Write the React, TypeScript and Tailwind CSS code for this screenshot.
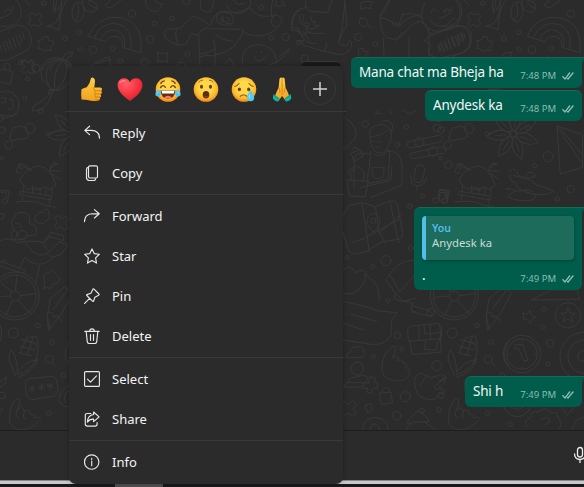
import type { ReactNode } from "react";

const FONT = "font-['Noto_Sans','Open_Sans',sans-serif]";

/* ---------- wallpaper ---------- */

function Dots({ items }: { items: number[][] }) {
  return (
    <>
      {items.map(([x, y, r], i) => (
        <circle key={i} cx={x} cy={y} r={r} />
      ))}
    </>
  );
}

function Flower({ x, y }: { x: number; y: number }) {
  return (
    <g transform={`translate(${x} ${y})`}>
      <circle r="9" />
      {[20, 72, 123, 175, 226, 278, 329].map((a) => (
        <path key={a} transform={`rotate(${a})`} d="M9 0Q36-30 80 0 36 30 9 0M22 0h34" />
      ))}
    </g>
  );
}

function TopTile() {
  return (
    <g>
      <path d="M0 78C45 86 68 60 62 25Q58 8 50 0M14 36q5-16 18-4M0 54q36-4 40-34M0 94l50-18q32-2 42 32c6 36-8 40-25 50L22 180l-22 2" />
      <path d="M0 135l5 18M8 125l10 30M17 123l11 26M26 118l12 31M37 113l10 26M48 108l12 30M58 103l8 24M68 98l5 20" />
      <path d="M87 45l10-7 9 8 12-6 8 8-9 11 8 12-9 9-13-7-9 7-9-8 7-12zM114 122l14-3 4-10 12 2 2 11 14 2v12l-8 4 2 12-14-2-8 5-7-8-11-2 4-10z" />
      <path d="M76 0l14 18M162 0q-6 20 2 40l6-38M184 0q2 36-14 64-10 12-30 14 24 4 36 12l4-20q-4-32 20-70M172 30l14-24" />
      <ellipse cx="234" cy="35" rx="18" ry="30" transform="rotate(5 234 35)" />
      <path d="M228 60q14-20 5-50M248 0q-4 16 8 30 20 14 34-2 6-24-26-28M264 8q10 12 26 18" />
      <path d="M316 14q6 12 20 8L364 0M316 14L332 0" />
      <path d="M266 108c22-66 112-74 146-22 10 16 14 40 10 72l-54-16q4-30-24-33-20-2-26 16zM284 112c22-54 84-52 104-12q8 16 4 48M302 118q16-34 46-27 32 10 26 50" />
      <path d="M62 186l12-8 9 8 12-8 8 8-9 10 8 14M127 210q12-30 42-31h30l14 14v17M150 210q4-20 28-30M180 180q24 10 32 30M190 180q-8-22 28-24l-4 14q-12-2-14 12M262 210q6-20 66-40l4 40M285 192l48-14" />
      <path d="M435 0q4 30 28 35 20-4 24-25-16 4-24-10M603 0l-3 24q10 16 34 10l8-34M494 106q-6-22 22-18l26-4 34-34q10-4 56 26 4-30 34-42l26 2q22 6 56-14 20 34 68 26M494 106q-4 14 44 30l20-4 16-32 20 6M536 134q-14-20-6-48" />
      <path d="M594 106q10-26 34-20l94 2q14 20 58 20 36-6 48-22M596 106l4 90M600 162q26-2 46-16M640 120q10 20 4 76M732 88q-20 66-88 78M646 100q10 18 50 24M600 170q20-8 44-2" />
      <rect x="650" y="38" width="50" height="36" rx="16" transform="rotate(12 675 56)" />
      <path d="M664 50l-1 10 12 4M670 50l-2 18M680 54q12-4 7 7l-10 8 12 2" />
      <path d="M680 16q10 28 40 24 38-10 32-40M700 0q8 20 34 10M728 196q-10-60 50-62 42 4 50 40 4 16-2 22M838 170l30-25q-5 26-60 51M762 170q14 30 36-2M768 158l2-3M784 158l2-3" />
      <path d="M818 0q-8 40 0 50 6-14 28 6-2 26-20 26-20-8-8-32M830 0l-4 18 30 0L844 0M472 156q16 10 32 0-8 16 0 30-16-6-32 0 6-14 0-30M670 196l20-20 12 20M874 90q2-52 26-60M874 90q16 0 26 8" />
      <Dots items={[[131,10,7],[396,41,11],[239,97,7],[195,115,7],[463,70,7],[516,55,7],[450,118,11],[338,145,7],[279,149,11],[241,148,6],[361,183,7],[434,187,11],[562,162,7],[559,2,11],[784,23,7],[857,111,11],[814,114,7],[544,198,12],[894,128,6]]} />
    </g>
  );
}

function TopRightExtras() {
  return (
    <g>
      <path d="M48 0q-8 20 10 34l56 4 6-24 6-14M50 22Q0 24 6 84h12q12-2 12 12 14 40 48 34M28 52q-3 28 28 28M28 52q0-14 12-6l2 8q-12 8 4 18l6-6q10 4 2 12M62 50l4 16 10-2-4 14 16-2q-18 18-40 8-8 20 54 16M18 86l18 20 22-12M22 122l20 0-8 12 28 8 40 12 50 10q32-4 34-38-10-14-12 8-12 10-28-6 12-36 24-50l-4-66M110 130q0 16-8 24M164 0q-2 70-16 120M40 94l20 30" />
      <path d="M212 8q18-8 36-2-12 10-4 20-16-6-34 2 8-8 0-20M210 54q14-4 22 8 4 12-8 18-14 0-16-14 0-8 4-12M234 76l10 9M206 170v-20l12-6 4 12 14-4-10 18" />
      <path d="M298 0q-10 36-30 50l50 20 12 8q10-24 60-34M268 50q10-20 30-50M272 54q-4 64 40 64 24-4 40-30 30-34 52-18 10 10 13 30v70M280 112l2 58M358 110l-2 60M340 40l-16 40-18-10M318 124l18-26M338 44q34-10 56 10" />
      <path d="M404 8c-30 68 20 92 50 84q68-10 60-70-2-18-12-22M424 36q4-20 16-2M464 36q4-18 18-2M418 56q34 48 74-2" />
      <path d="M404 122l24-20 86-25q32 4 30 38 0 30-24 44l-74 16-30-12 4-28zM416 98l14 6M444 136l4 18M450 128l10 28M462 122l10 28M474 114l10 34M486 108l10 32M500 104l9 30M512 100l8 24M522 100l3 16" />
      <Dots items={[[205,111,11],[256,132,7],[44,176,11]]} />
    </g>
  );
}

function SideTile() {
  return (
    <g>
      <path d="M0 34l8-7 30 8-6 38-32-8M12 28q-2-16 10-18 10 2 7 22M64 8l12-8 10 10 10-8 9 10-8 10 9 12-10 8-13-8-10 7-9-10 10-10z" />
      <path d="M128 60c-24-50 34-92 80-50 20 40-8 80-46 82zM154 90q-36-54 8-90M164 92q-6-60 22-90M170 90q40-40 28-84M150 90q20-4 28 0M156 95q-16 18-56 44l-4 14q44 2 58-46" />
      <path d="M0 94l12 4 4-6 22 6 4 8q18 4 14 38-4 18-20 24l-26 8-10-6M4 114h14l-2 14h-10M28 118q20 0 8 14 12 14-10 16M0 162q20 12 52 0" />
      <path d="M34 216l8-14 10 2 4-6 22 4 8 28-10 6-24 2-12 5-10-6z" />
      <path d="M60 360q20-40 60-42 34 8 48 58l-18 12-16-8-14 9-18-8-16 8-14-12zM58 318q-12-10 10 0l26 14q-38-36-40-14 0 8 14 6M150 330q4-30 24-18-20 4-26 20l32 2M52 324q-10 22 10 14M154 340l24 18M70 374v26M98 378v22M120 382v20M138 382v20M156 386v18M62 394l92 14v12l-94-16zM68 404v16M148 416v16M46 426q60-8 84 8l36 8M98 388h26" />
      <path d="M0 390l28 4-6 34q-18 6-16-8l12-4 2-18-20-2M0 460l14 4-6 14-8-2M106 470l14-14 8 2 6-10q16-2 12 14l4 10-22 20-22-6zM164 472l12-6 6 12 14-10 8 10-8 12 8 14-12 6-10-10-10 6-8-8 8-12z" />
      <path d="M42 510q-16-30 4-40 0-16 26-12 22 0 16 34 22-2 22 20 4 20-26 14-14 20-50 12M36 534q-10-18 8-24 14 6 0 28M46 490q14-4 18 12M0 542q24-14 52 6 48-10 78 0M130 548l20-18 40 12 2-14-40-12-22 34 10 18M198 552l-20-6-36 32q4 14 20 12l20-6 20-26zM78 550q30 50 66 30M74 592q46 44 90-4M74 592l-16 34M118 618l-10 52" />
      <circle cx="67" cy="525" r="14" />
      <circle cx="46" cy="708" r="72" />
      <circle cx="46" cy="708" r="63" />
      <circle cx="46" cy="708" r="15" />
      <path d="M46 693l5-48M61 707l48-6M55 720l34 40M38 721l-20 44M32 708l-48 4M36 696l-32-26M0 618l70 22q8-6 0-12l-70-24M4 606q8-12 16 0" />
      <path d="M130 650q4-14 18-10l6-12 8 8 18 20-8 14-14 4-6 12-10-4-10 4 2-22zM142 768l8-52 44-36 24 18-32 60-38 50-2 2zM144 756q14-2 18 16 14-12 22 12M204 688l-44 60M150 808l-8-40" />
      <path d="M86 836q4-8 22-8 14 20 0 74-16 30-56 42M46 946l-18-44q-4-20 6-34 20 30 18 70 22-34 62-40-10 36-60 54M62 838l46 12M60 858l44 12M56 878l40 10M84 826l-24 52M100 830l-18 56M90 846q20 0 20 20" />
      <path d="M86 956l70-7q12 2 14 14l4 28q-2 16-14 18l-66 10q-12-4-14-14l-4-30q-2-14 10-19zM96 976v20M88 982l16 8M104 980l-16 10M124 972v20M116 978l16 8M132 976l-16 10M150 968v20M142 974l16 8M158 972l-16 10" />
      <path d="M30 1090c-6-36 8-70 24-74 12-2 0 24 0 34 4-10 18-8 18 4 8-8 20-2 20 10 10-4 12 6 10 10 30-8 22 8-4 24-20 18-60 14-68-8M52 1048q-10 20 4 26M74 1054q-10 18 2 24" />
      <path d="M158 906l8 12M208 846q-26 36 0 70M206 976q-24 10-30 44l16 20h16M206 990q-24 26-8 38M0 795q10 24 0 50M0 965l18-14q2 26-18 30" />
      <circle cx="148" cy="898" r="12" />
      <Dots items={[[62,7,7],[108,25,12],[82,56,6],[152,96,7],[74,114,6],[122,153,7],[90,205,15],[144,221,6],[26,255,12],[4,294,5],[114,796,7],[40,819,15],[156,846,7],[190,946,7],[146,1060,7],[6,1006,10],[0,1050,7],[0,175,10],[6,210,10]]} />
    </g>
  );
}

function RightArea() {
  return (
    <g>
      <path d="M116 0q-8 4-10 10h20M190 0l20 12 20-12M150 0q0 10 8 14" />
      <path d="M90 84q-12-40 38-40 34 10 25 44-8 18-12 28-6 18-30 12-20-14-21-44M90 80q30 0 56-22M122 40q4-12 22-8 22 10 10 32M96 94l8 0M112 96l10-2M106 110q6 4 12 0M92 124l-4 48q-10 40 0 48l56-12 6-86-10-3M104 134q20 10 32-6M96 172h36q4 38-20 34-18 0-16-34M140 124q42-4 46 40v62l-94 36M156 168l-4 44-90 20M42 232v-88q10-20 46-12" />
      <path d="M22 210l62 4-8 46-46-2zM34 208q-8-22 16-40 30 12 20 42M34 130l26-12 10 20-26 16zM24 192q4-18 14-20M10 20q50 30 36 66l-28 28-18 0M36 120q6-16 20-2" />
      <path d="M204 96l92-20q22 4 6 20l-92 18q-16-6-6-18M212 130l92-20q22 4 6 20l-88 16q-20-6-10-16" />
      <circle cx="238" cy="97" r="14" />
      <circle cx="279" cy="124" r="14" />
      <rect x="224" y="164" width="28" height="54" rx="14" transform="rotate(10 238 190)" />
      <path d="M212 194q-2 32 20 34 22 2 28-26M232 228l-2 12M276 272q4-12 18-6l4-28 30 2-6 36q-12 8-16-2 0-10 14-8l2-18-22 0-2 24q-16 16-22 0" />
      <path d="M18 300q4-14 16-16l34-6 38 12 48-18q14 2 18 12l16 84q2 16-14 20l-50 8-44 28-36 8q-16-2-20-14l-18-62q-2-38 12-56M66 280l22 146M106 290l12 80M150 274l26 124M118 370l66-58M34 400l40-16 110-60M118 366l18 34" />
      <path d="M100 366q-26-26-18-40 6-18 24-14 20 8 12 28-6 20-18 26" />
      <circle cx="100" cy="332" r="8" />
      <path d="M10 480q24-20 36 8 26-20 38 12 36 20 34 72M10 550l26 2q50-28 38-62M10 574l76 18 24 10 62 6-18 24 0 40q-10 30-54 32L10 690M32 612l78 22M10 640l62 20" />
      <path d="M138 510q30-60 86-60M138 510l28 40 24 24 40-10M152 498l28 48 60-70M166 550q-10 20 20 24l24 2 8 12 50 14q16 16 6 18l-56-14M220 578l-8 24 16 4" />
      <circle cx="272" cy="606" r="11" />
      <path d="M204 656q4-8 10-8l80-8q12 6 12 18l-3 28-96 8q-6-20-3-38M210 692l6 42 88-8-3-44M252 646l3 26 48-4M236 646l2 44M270 644l2 42M256 694l-2 24 36 2 2-24" />
      <path d="M18 742q-2-10 12-16 4-18 26-16 20 2 14 16 12 8-6 16zM10 832l22-28q36-10 46-6l6 6-8 14-56 0-6 14 54-2 6-12 12 2 4-20 16 4-2 12 10 4-2 14-14 2-4 14-14-4 4-10-20-2" />
      <path d="M126 778c-4-36 22-68 36-70 12 2-4 24-4 36 8-12 20-4 16 8 10-6 16 0 16 8 10-4 14 8 6 14 14-2 14 10 12 20-10 20-34 22-52 16-24-6-28-18-30-32M224 820c-2-24 14-36 28-26l22 10q42-20 44 0-22 12-34 24-4 12 14 8 30 4 4 16-14 18-32 18-44-4-46-50M238 828l20-28" />
      <path d="M118 850l34-4 6 32-32 6zM128 848q-2-14 10-14 12 2 10 12M10 872l14 12 14-12 12 12-12 14 12 10-12 10-14-8-14 8M76 886l16-6 6 18-14 10zM68 960q2-38 38-38 40 4 38 38" />
      <circle cx="104" cy="956" r="14" />
      <path d="M196 960q6-12 20-20l-16-2q12-20 34-36 26 14 34 32l-16 2q20 10 34 24M218 936h40" />
      <path d="M652 48l76 26v98l-66 20zM652 48l34 54 42 60M662 56l66 80" />
      <path d="M506 186q14-18 26 0 0 14 16 16 20 2 40 22l52 18q-20 18-60 10-50-10-56-36-18 0-14-22M520 196l28 8 12-6M560 190q20-10 26 10l-28 6M504 260q10-18 36-18 34-6 44 8 12 16-18 22-40 2-62-12M504 240q-20-10 22 0" />
      <path d="M575 570l58-30h78l8 26zM548 608q14 12 22-8 2 20 18 20-18 8-18 20-8-16-20-12 4-10-2-20" />
      <circle cx="684" cy="616" r="38" />
      <path d="M684 594l6 15 16 1-12 10 4 16-14-9-14 9 4-16-12-10 16-1z" />
      <circle cx="546" cy="732" r="56" />
      <circle cx="546" cy="732" r="46" />
      <path d="M526 704l22 0 16 46-12 4-16-38-10 2zM546 686v8M504 732h6M582 732h8M546 770v6" />
      <circle cx="734" cy="740" r="74" />
      <circle cx="734" cy="740" r="50" />
      <path d="M734 720q-22 4-20 24 6 14 20 8" />
      <circle cx="532" cy="878" r="42" />
      <circle cx="532" cy="870" r="28" />
      <path d="M560 950q-10-20 12-28 0-20 22-16 20-20 40 2 22-4 20 16 16 14 4 32M604 930q10-12 22-4 6 16-10 18M664 890l18 26 20-26M698 958q4-34 34-36" />
      <Dots items={[[76,42,10],[199,51,7],[290,54,11],[173,104,7],[325,165,11],[248,259,6],[210,289,7],[22,442,6],[138,452,15],[98,470,6],[212,414,7],[144,572,6],[172,676,10],[186,718,6],[99,740,6],[52,776,19],[290,767,15],[196,860,15],[170,917,13],[246,901,7],[564,54,7],[625,140,15],[584,167,6],[692,237,11],[652,267,6],[612,597,7],[610,652,6],[630,700,11],[624,762,6],[510,943,7]]} />
    </g>
  );
}

function Wallpaper() {
  const s = "scale(.33333)";
  return (
    <svg className="absolute inset-0" width="584" height="430" fill="none" stroke="#383838" strokeWidth="3" strokeLinecap="round" strokeLinejoin="round">
      <g transform={s}><TopTile /></g>
      <g transform={"translate(439 0) " + s}><TopTile /></g>
      <g transform={"translate(290 0) " + s}><TopRightExtras /></g>
      <g transform={"translate(0 60) " + s}><SideTile /><Flower x={222} y={222} /></g>
      <g transform={"translate(439 60) " + s}><SideTile /></g>
      <g transform={"translate(340 110) " + s}><RightArea /><Flower x={520} y={72} /></g>
    </svg>
  );
}

/* ---------- emojis ---------- */

function EmojiDefs() {
  return (
    <svg className="absolute" width="0" height="0">
      <defs>
        <radialGradient id="face" cx=".5" cy=".42" r=".56">
          <stop offset=".45" stopColor="#ffd84a" />
          <stop offset=".8" stopColor="#fcb92c" />
          <stop offset="1" stopColor="#ee8a1d" />
        </radialGradient>
        <linearGradient id="skin" x1="0" y1="0" x2="0" y2="1">
          <stop offset="0" stopColor="#ffcf48" />
          <stop offset="1" stopColor="#f2a01f" />
        </linearGradient>
        <radialGradient id="heart" cx=".35" cy=".25" r=".8">
          <stop offset="0" stopColor="#ff6069" />
          <stop offset=".6" stopColor="#f8323f" />
          <stop offset="1" stopColor="#d8202f" />
        </radialGradient>
      </defs>
    </svg>
  );
}

function Emoji({ children }: { children: ReactNode }) {
  return (
    <button className="flex w-[38px] items-center justify-center">
      <svg width="26" height="26" viewBox="0 0 26 26">{children}</svg>
    </button>
  );
}

function EmojiRow() {
  return (
    <>
      <Emoji>
        <g transform="translate(.6 .4) scale(.96)">
          <path fill="url(#skin)" d="M2 13.500Q5 12 7.500 11.300 11 7.500 11.500 3q.2-2.200 2-1.900 3.200.8 2.400 5.900l-.6 4.500h6q2.300.2 2.100 1.900-.1 1.200-1.100 1.500 1.200.8.900 2.200-.3 1.200-1.500 1.500 1.100.8.7 2.100-.3 1.200-1.600 1.400.8.800.4 1.800-.5 1.400-2.600 1.500-6 .6-9.300-.5-2.300-.8-4-.5L2 24Q1.200 18 2 13.500z" />
          <path fill="none" stroke="#c9770e" strokeWidth=".8" strokeLinecap="round" d="M22.800 14.900h-6.300q-2.200-.2-1.800-3M22.200 18.200h-5.700M21 21.500h-4.500M16.400 24.300q3 .3 4.600-.2M16.200 15q-1.200 1.500.2 3.100-1.200 1.600.2 3.200" />
        </g>
      </Emoji>
      <Emoji>
        <path fill="url(#heart)" d="M13 25C9 22.200.6 16.600.6 9.100.6 4.800 3.500 2.300 7 2.300c2.700 0 4.900 1.400 6 4 1.100-2.600 3.300-4 6-4 3.500 0 6.400 2.500 6.400 6.800 0 7.500-8.400 13.100-12.400 15.900z" />
        <path d="M3 6.600Q5 3.800 8 4.800" stroke="#ff8a8f" strokeWidth="1.300" fill="none" strokeLinecap="round" />
      </Emoji>
      <Emoji>
        <circle cx="13" cy="13.500" r="12.300" fill="url(#face)" />
        <path fill="none" stroke="#70400f" strokeWidth="1.400" strokeLinecap="round" d="M5.600 11.500q2.300-3.600 4.800-.2M15.600 11.300q2.500-3.400 4.800.2M5.800 7.300q1.300-2 3.400-2.400M20.200 7.300q-1.300-2-3.400-2.400" />
        <path fill="#6c2b16" d="M5.800 14.500h14.400q-.2 8-7.200 8.200Q6 22.500 5.800 14.500z" />
        <path fill="#fff" d="M6.600 14.700h12.800l-.6 2.700H7.200z" />
        <path fill="#f17a76" d="M9 21.300q4-3 8 0-3.700 2.600-8 0z" />
        <path fill="#4ac4ec" d="M6 14Q.8 13.900.4 17.500q-.2 3 2.600 3 3.600-.4 3-6.500zM20 14q5.200-.1 5.600 3.500.2 3-2.600 3-3.600-.4-3-6.500z" />
        <path fill="#8be5f5" d="M4.800 15.200Q2 15.500 1.500 17.500q1.600-.2 3.300-2.300zM21.200 15.200q2.800.3 3.300 2.300-1.600-.2-3.300-2.300z" />
      </Emoji>
      <Emoji>
        <g transform="translate(0 .5)">
          <circle cx="13" cy="13" r="12.300" fill="url(#face)" />
          <ellipse cx="8.500" cy="10.200" rx="1.600" ry="2" fill="#63401a" />
          <ellipse cx="17.500" cy="10.200" rx="1.600" ry="2" fill="#63401a" />
          <path fill="none" stroke="#a66d18" strokeWidth="1" strokeLinecap="round" d="M6 5.500q1.300-1.900 3.500-1.900M20 5.500q-1.300-1.900-3.500-1.900" />
          <ellipse cx="13" cy="18.300" rx="3.300" ry="3.700" fill="#5c2c17" />
          <path fill="#8a3c20" d="M10.700 20.300q2.300-2 4.600 0-2.200 2.600-4.600 0z" />
        </g>
      </Emoji>
      <Emoji>
        <g transform="translate(0 .5)">
          <circle cx="13" cy="13" r="12.300" fill="url(#face)" />
          <ellipse cx="8.400" cy="12.800" rx="1.600" ry="1.900" fill="#63401a" />
          <ellipse cx="17.700" cy="12.800" rx="1.600" ry="1.900" fill="#63401a" />
          <path fill="none" stroke="#94611a" strokeWidth="1.200" strokeLinecap="round" d="M3.800 10q2.500-.4 4.200-3M22.200 10q-2.500-.4-4.200-3M9.300 19.800q3.300-2.800 6.600 0" />
          <path fill="#55c7ef" d="M19.500 13.500q4 5.300 3.700 8-.4 3.300-3.600 3.300-3.500-.4-3.500-3.500.1-2.600 3.400-7.800z" />
          <path fill="#a7effb" d="M18.500 18q-1.300 2.600-.5 4.500.8-1.300 1.300-4.500z" />
        </g>
      </Emoji>
      <Emoji>
        <g transform="translate(1 .5) scale(.93 1)">
          <path fill="url(#skin)" d="M12.600 1.200q-2-.8-2.400 1.400L9.300 11 6.300 17l-1 3.200 4 4 3.700-4.600 3.700 4.600 4-4-1-3.200-3-6-.9-8.400q-.4-2.200-2.400-1.400l-.4.400z" />
          <path fill="none" stroke="#c77b12" strokeWidth=".8" d="M13 2v16.500M9.500 11.500q1.700 1.500 1 5M16.500 11.500q-1.700 1.500-1 5" />
          <path fill="#10b5a0" d="M3.800 17.700l6.600 4.200-1.600 3q-3.200.3-5.600-2.600-.3-2.700.6-4.600zM22.200 17.700l-6.600 4.200 1.600 3q3.200.3 5.600-2.600.3-2.700-.6-4.600z" />
          <path stroke="#07877a" strokeWidth=".8" d="M4 18.500l6 4M22 18.500l-6 4" />
        </g>
      </Emoji>
    </>
  );
}

/* ---------- context menu ---------- */

const icons: Record<string, ReactNode> = {
  Reply: <path d="M5.600 1.200L.8 5.400l4.800 4.200M1 5.400h6.500q8 .4 8 7.800" />,
  Copy: (
    <>
      <rect x="4.500" y=".8" width="9" height="12.200" rx="1.500" />
      <path d="M4.300 2.400q-1.800.2-1.800 2v8.200q0 2.900 2.900 2.900h4.400q1.700 0 2-1.800" />
    </>
  ),
  Forward: <path d="M10.400 1.600l4.800 4.200-4.800 4.200M15 5.800H8.500q-8 .4-8 7.800" />,
  Star: <path d="M8 .9l2.200 4.700 5.100.7-3.700 3.600.9 5.200L8 12.600l-4.500 2.500.9-5.200L.7 6.300l5.100-.7z" />,
  Pin: <path d="M10 1.100l4.900 4.900q.6.700-.3 1.200l-3.700 2-1.300 3.900q-.3.700-.9.200L2.800 7.500q-.5-.6.200-.9l3.900-1.400 1.900-3.800q.5-.8 1.200-.3zM5.600 10.400L.6 15.400" />,
  Delete: <path d="M.8 3.300h14.400M5.700 3.200q0-2.400 2.300-2.400t2.300 2.400M2.200 3.500l1.100 10.400q.2 1.600 1.800 1.600h5.800q1.600 0 1.800-1.600l1.100-10.400M6.500 6.500v5.800M9.500 6.500v5.800" />,
  Select: (
    <>
      <rect x=".6" y=".6" width="14.800" height="14.800" rx="1" />
      <path d="M3.500 8.200l3 3 6-6.300" />
    </>
  ),
  Share: <path d="M6.800 2.500H3.300q-2 0-2 2v8.600q0 2 2 2h7.800q2 0 2-2v-1.600M9.600 1l5.500 4.900-5.500 4.700V8.100q-4-.3-6.200 3 .2-6.800 6.200-7.600z" />,
  Info: (
    <>
      <circle cx="7.700" cy="8" r="7.200" />
      <path d="M7.700 7v4.700M7.700 4.200v1.200" />
    </>
  ),
};

function Item({ name }: { name: string }) {
  return (
    <button className="flex h-10 w-full items-center gap-3 pl-[15px] text-[13px] leading-5 text-[#f4f4f4]">
      <svg width="16" height="16" viewBox="0 0 16 16" fill="none" stroke="#e8e8e8" strokeWidth="1.150" strokeLinecap="round" strokeLinejoin="round">
        {icons[name]}
      </svg>
      <span>{name}</span>
    </button>
  );
}

function Separator() {
  return <div className="my-px h-px bg-[#393939]" />;
}

function ContextMenu() {
  return (
    <div className="absolute top-[61px] left-[69px] w-[274px]">
      <div className="ml-[232px] h-[5px] w-10 rounded-t-lg border-t border-[#383838] bg-[#1a1a1a]" />
      <div className="h-[418px] rounded-[7px] bg-[#2b2b2b] shadow-[0_0_5px_rgba(0,0,0,0.28)]">
        <div className="flex h-[45px] items-center pt-px pl-1">
          <EmojiRow />
          <button className="ml-[3px] flex h-8 w-8 items-center justify-center rounded-full border border-[#383838]">
            <svg width="16" height="16" stroke="#d4d4d4" strokeWidth="1.500"><path d="M8 1v14M1 8h14" /></svg>
          </button>
        </div>
        <div className="-mx-1 mb-px h-px bg-[#383838]" />
        <Item name="Reply" />
        <Item name="Copy" />
        <Separator />
        <Item name="Forward" />
        <Item name="Star" />
        <Item name="Pin" />
        <Item name="Delete" />
        <Separator />
        <Item name="Select" />
        <Item name="Share" />
        <Separator />
        <Item name="Info" />
      </div>
    </div>
  );
}

/* ---------- messages ---------- */

function Meta({ time }: { time: string }) {
  return (
    <div className="flex items-end text-[9.500px] leading-[12px] text-[#8dbcb0]">
      <span>{time}</span>
      <svg className="mb-[2px] ml-[6px]" width="12" height="8" fill="none" stroke="#93beb4" strokeWidth="1.250">
        <path d="M.4 4.300L3 7l5-6.500M5.200 6.200l.8.800 5.400-6.500" />
      </svg>
    </div>
  );
}

function Tail() {
  return (
    <svg className="absolute -top-px -right-[3px]" width="10" height="10">
      <path d="M0 0h10L7 6v4H0z" fill="#005c4b" />
      <path d="M0 .5h10" stroke="#166a5a" />
    </svg>
  );
}

function Bubble({ text, time, size, tail }: { text: string; time: string; size: string; tail?: boolean }) {
  return (
    <div className={`relative flex h-[31px] items-end justify-between rounded-md border-t border-[#166a5a] bg-[#005c4b] pr-2 pb-[6px] pl-2 ${size}`}>
      <p className="mb-px text-[13.500px] leading-[18px] tracking-[-0.2px] whitespace-nowrap text-[#f3f8f7]">{text}</p>
      <Meta time={time} />
      {tail && <Tail />}
    </div>
  );
}

export default function App() {
  return (
    <div className={`relative flex h-[487px] w-[584px] flex-col overflow-hidden bg-[#2b2b2b] ${FONT}`}>
      <EmojiDefs />
      <main className="relative h-[430px] shrink-0">
        <Wallpaper />
        <div className="relative flex flex-col items-end pt-[57px] pr-[2px]">
          <Bubble text="Mana chat ma Bheja ha" time="7:48 PM" size="w-[231px]" tail />
          <div className="h-[2px]" />
          <Bubble text="Anydesk ka" time="7:48 PM" size="w-[157px]" />
          <div className="relative mt-[86px] h-[83px] w-[168px] rounded-md border-t border-[#166a5a] bg-[#005c4b] px-2 pt-2">
            <Tail />
            <div className="h-11 rounded border-l-4 border-[#53bdeb] bg-[#1d6b5a] pt-[5px] pl-[6px] shadow-[0_1px_3px_rgba(0,0,0,0.3)]">
              <p className="text-[10.500px] leading-[14px] font-semibold text-[#53bdeb]">You</p>
              <p className="text-[11.300px] leading-[16px] text-[#c9dcd7]">Anydesk ka</p>
            </div>
            <div className="flex h-[25px] items-end justify-between">
              <p className="mb-px text-[13.500px] leading-[18px] text-white">.</p>
              <Meta time="7:49 PM" />
            </div>
          </div>
          <div className="h-[86px]" />
          <Bubble text="Shi h" time="7:49 PM" size="w-[117px]" tail />
        </div>
      </main>
      <footer className="flex h-[50px] shrink-0 items-center justify-end border-t border-[#1e1e1e] bg-[#2b2b2b] pb-[2px]">
        <svg className="-mr-[4px] shrink-0" width="16" height="18" fill="none" stroke="#eeeeee" strokeWidth="1.300">
          <rect x="5.500" y="1.500" width="5" height="9.500" rx="2.500" />
          <path d="M2.500 7.500q0 6 5.500 6t5.500-6M8 13.500V17" />
        </svg>
      </footer>
      <div className="h-1 shrink-0 border-t border-[#88888b] bg-[#c8c8cb]" />
      <div className="h-[3px] shrink-0 bg-[#19191b] pl-[115px]">
        <div className="h-[3px] w-12 bg-[#505052]" />
      </div>
      <ContextMenu />
    </div>
  );
}
